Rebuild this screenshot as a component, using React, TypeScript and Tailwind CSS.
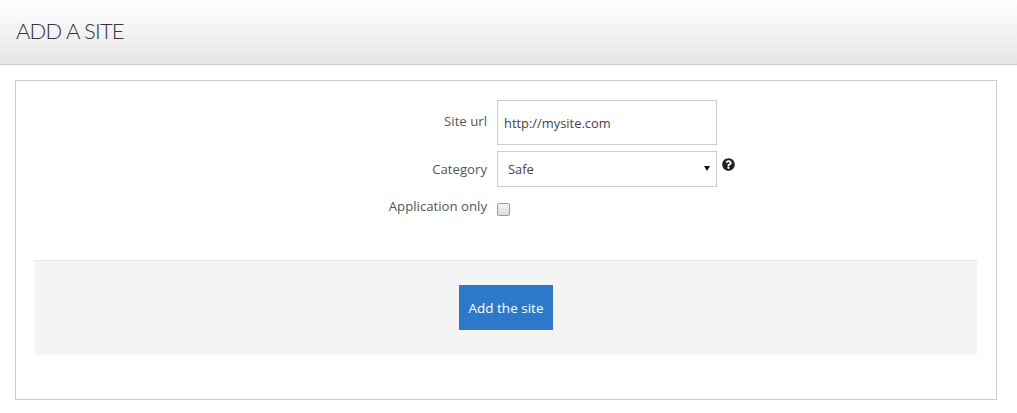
import React from 'react';
import { FaQuestionCircle } from 'react-icons/fa';

const labelClass = 'w-[452px] text-right text-[13.2px] text-[#555]';

const App: React.FC = () => {
  return (
    <div className="h-[413px] w-[1017px] overflow-hidden bg-white font-['Open_Sans',sans-serif] text-[14px] text-[#444]">
      <header className="flex h-[65px] items-center border-b border-[#ccc] bg-gradient-to-b from-white to-[#e6e6e6] px-[16px] pb-[3px]">
        <h1 className="font-['Lato',sans-serif] text-[22px] font-light tracking-[-0.8px] text-[#333]">ADD A SITE</h1>
      </header>

      <main className="mx-[15px] mt-[15px] h-[320px] w-[982px] border border-[#ccc] px-[19px] pt-[19px]">
        <form>
          {/* Site url */}
          <div className="flex items-start gap-[10px]">
            <label className={`${labelClass} pt-[11px] leading-[20px]`}>Site url</label>
            <input
              type="text"
              defaultValue="http://mysite.com"
              className="h-[45px] w-[220px] border border-[#ccc] px-[6px] text-[12.9px] text-[#444] outline-none"
            />
          </div>

          {/* Category */}
          <div className="mt-[6px] flex items-start gap-[10px]">
            <label className={`${labelClass} pt-[8px] leading-[20px]`}>Category</label>
            <div className="relative h-[36px] w-[220px]">
              <select className="h-full w-full appearance-none rounded-none border border-[#ccc] bg-white pl-[10px] pt-[1px] text-[12.9px] text-[#444] outline-none">
                <option>Safe</option>
              </select>
              <svg viewBox="0 0 6 5" className="absolute right-[7px] top-[15px] h-[5px] w-[6px]">
                <path d="M0 0h6L3 5z" fill="#111" />
              </svg>
            </div>
            <FaQuestionCircle className="-ml-[5px] mt-[7px] text-[13px] text-[#222]" />
          </div>

          {/* Application only */}
          <div className="mt-[9px] flex items-start gap-[10px]">
            <label className={`${labelClass} leading-[20px]`}>Application only</label>
            <input
              type="checkbox"
              className="mt-[7px] h-[13px] w-[13px] appearance-none rounded-[2px] border border-[#999] bg-gradient-to-b from-[#f4f4f4] to-[#dcdcdc]"
            />
          </div>

          <div className="mt-[44px] flex h-[95px] justify-center border-t border-[#e5e5e5] bg-[#f4f4f4] pt-[24px]">
            <button type="button" className="h-[45px] w-[94px] bg-[#2d78c8] pt-[1px] text-[13.5px] text-white">
              Add the site
            </button>
          </div>
        </form>
      </main>
    </div>
  );
};

export default App;
